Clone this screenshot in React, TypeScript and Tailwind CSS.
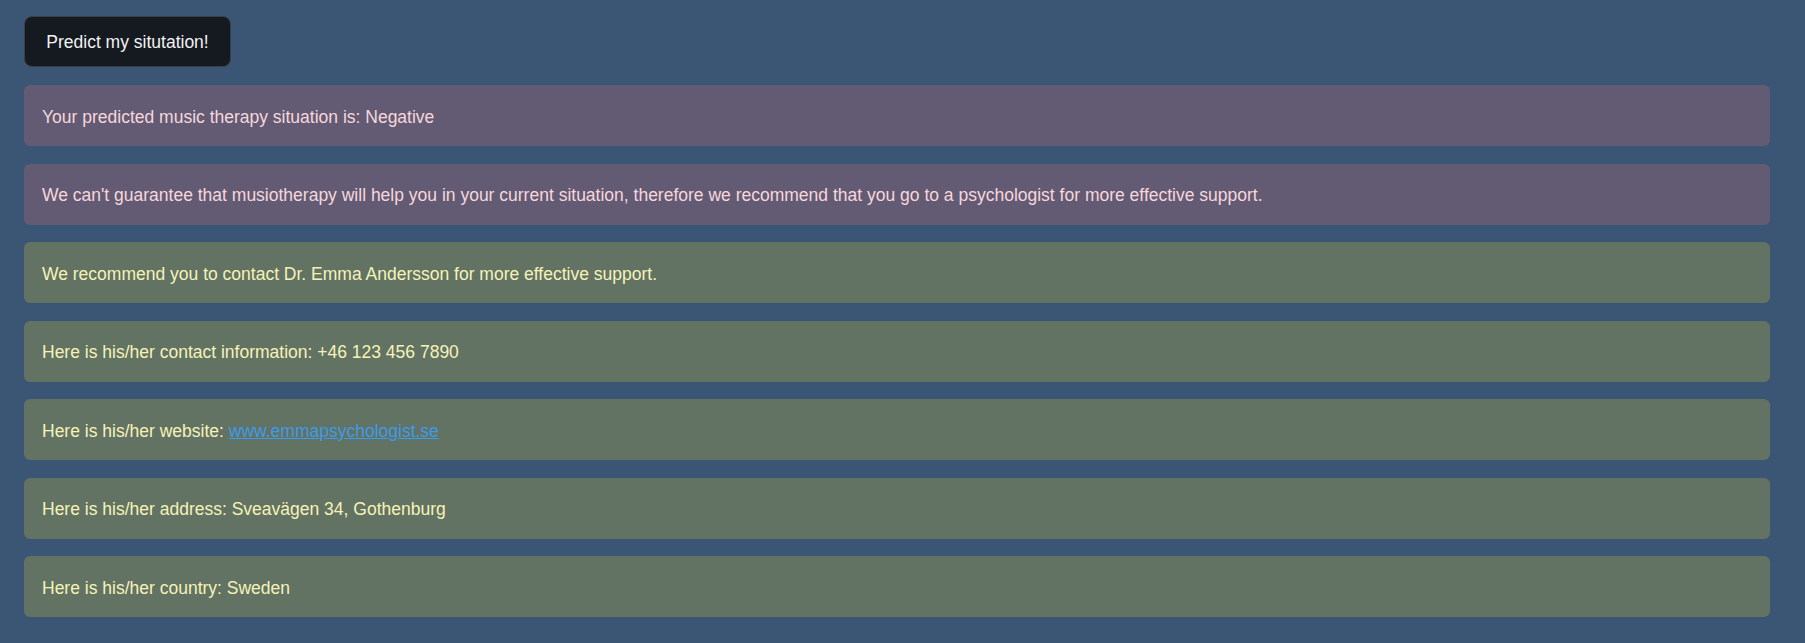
import React from "react";

const purple = "rounded-md bg-[#625b73] text-[#f7d6dc]";
const green = "rounded-md bg-[#627263] text-[#f5f2b8]";

function Box({ cls, children }: { cls: string; children: React.ReactNode }) {
  return (
    <div className={`${cls} h-[61px] flex items-center pl-[18px] pr-4 pt-[3px] text-[17.5px]`}>
      <span>{children}</span>
    </div>
  );
}

export default function App() {
  return (
    <div
      className="min-h-[643px] w-full bg-[#3a5674] pt-4 pl-6 pr-[35px] pb-6"
      style={{ fontFamily: '"Liberation Sans", Arial, sans-serif' }}
    >
      <button className="h-[51px] w-[207px] rounded-lg border border-[#3b3f48] bg-[#151920] pt-[2px] text-[17.5px] text-[#f2f2f2]">
        Predict my situtation!
      </button>
      <div className="mt-[18px] flex flex-col gap-[17.5px]">
        <Box cls={purple}>Your predicted music therapy situation is: Negative</Box>
        <Box cls={purple}>
          We can't guarantee that musiotherapy will help you in your current situation, therefore we recommend that you go to a psychologist for more effective support.
        </Box>
        <Box cls={green}>We recommend you to contact Dr. Emma Andersson for more effective support.</Box>
        <Box cls={green}>Here is his/her contact information: +46 123 456 7890</Box>
        <Box cls={green}>
          Here is his/her website:{" "}
          <a href="#" className="text-[#3d9be9] underline">
            www.emmapsychologist.se
          </a>
        </Box>
        <Box cls={green}>Here is his/her address: Sveavägen 34, Gothenburg</Box>
        <Box cls={green}>Here is his/her country: Sweden</Box>
      </div>
    </div>
  );
}
